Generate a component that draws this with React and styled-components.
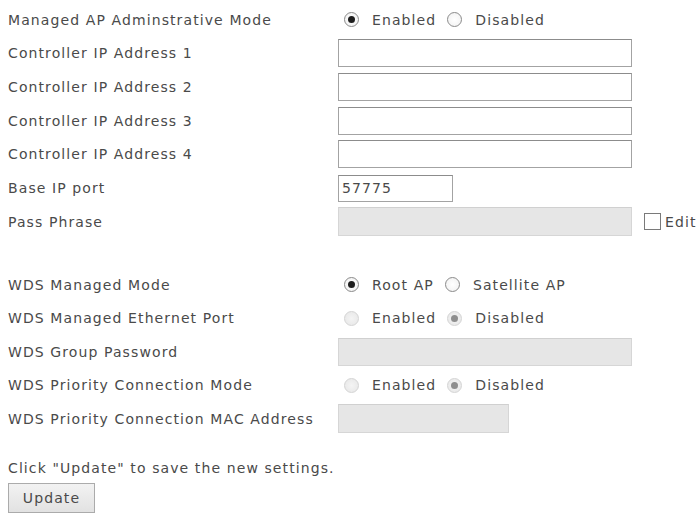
import React from "react";
import styled, { createGlobalStyle } from "styled-components";

const GlobalStyle = createGlobalStyle`
  body {
    margin: 0;
    background: #fff;
    font-family: "DejaVu Sans", Verdana, sans-serif;
    font-size: 14px;
    letter-spacing: 1.1px;
    color: #4a4a4a;
  }
`;

const Page = styled.div`
  padding: 3px 8px 0;
  width: 700px;
  box-sizing: border-box;
  overflow: hidden;
`;

const Section = styled.div`
  display: flex;
  flex-direction: column;
  margin-top: ${props => props.gap || 0}px;
`;

const Row = styled.div`
  display: grid;
  grid-template-columns: 330px 1fr;
  align-items: center;
  height: ${props => props.h}px;
`;

const Label = styled.div`
  white-space: nowrap;
`;

const Control = styled.div`
  display: flex;
  align-items: center;
  white-space: nowrap;
`;

const TextBox = styled.input`
  box-sizing: border-box;
  width: ${props => props.w}px;
  height: ${props => props.h || 28}px;
  margin: 0;
  padding: 0 3px;
  font: inherit;
  letter-spacing: 1.1px;
  color: #4a4a4a;
  border: 1px solid ${props => (props.disabled ? "#d6d6d6" : "#a3a3a3")};
  border-top-color: ${props => (props.disabled ? "#d0d0d0" : "#8c8c8c")};
  background: ${props => (props.disabled ? "#e6e6e6" : "#fff")};
  outline: none;
`;

const RadioOption = styled.label`
  display: flex;
  align-items: center;
  margin-left: 6px;
  margin-right: 5px;
`;

const RadioDot = styled.span`
  box-sizing: border-box;
  width: 15px;
  height: 15px;
  border-radius: 50%;
  margin-right: 13px;
  border: 1px solid ${props => (props.off ? "#d4d4d4" : "#8a8a8a")};
  background: ${props =>
    props.off
      ? "radial-gradient(circle, #f4f4f4 0%, #e6e6e6 100%)"
      : "radial-gradient(circle, #ffffff 0%, #f0f0f0 100%)"};
  display: flex;
  align-items: center;
  justify-content: center;
  &::after {
    content: "";
    display: ${props => (props.checked ? "block" : "none")};
    width: 7px;
    height: 7px;
    border-radius: 50%;
    background: ${props => (props.off ? "#8e8e8e" : "#1e1e1e")};
  }
`;

const CheckBox = styled.span`
  box-sizing: border-box;
  width: 17px;
  height: 17px;
  border: 1px solid #7a7a7a;
  background: #fff;
  margin: 0 4px 0 12px;
`;

const Note = styled.div`
  margin-top: 24px;
  line-height: 16px;
`;

const Button = styled.button`
  margin-top: 7px;
  width: 87px;
  height: 30px;
  font: inherit;
  letter-spacing: 1.1px;
  color: #4a4a4a;
  border: 1px solid #ababab;
  background: linear-gradient(#f2f2f2, #e2e2e2);
  padding: 0;
`;

const Radios = ({ options, value, disabled }) => (
  <Control>
    {options.map(o => (
      <RadioOption key={o}>
        <RadioDot checked={o === value} off={disabled} />
        {o}
      </RadioOption>
    ))}
  </Control>
);

const first = 33.67;
const second = 33.5;

export default function App() {
  return (
    <Page>
      <GlobalStyle />
      <Section>
        <Row h={first}>
          <Label>Managed AP Adminstrative Mode</Label>
          <Radios options={["Enabled", "Disabled"]} value="Enabled" />
        </Row>
        {[1, 2, 3, 4].map(n => (
          <Row h={first} key={n}>
            <Label>Controller IP Address {n}</Label>
            <Control>
              <TextBox w={294} h={28} readOnly value="" />
            </Control>
          </Row>
        ))}
        <Row h={first}>
          <Label>Base IP port</Label>
          <Control>
            <TextBox w={115} h={27} readOnly value="57775" />
          </Control>
        </Row>
        <Row h={first}>
          <Label>Pass Phrase</Label>
          <Control>
            <TextBox w={294} h={29} disabled value="" />
            <CheckBox />
            Edit
          </Control>
        </Row>
      </Section>
      <Section gap={29.5}>
        <Row h={second}>
          <Label>WDS Managed Mode</Label>
          <Radios options={["Root AP", "Satellite AP"]} value="Root AP" />
        </Row>
        <Row h={second}>
          <Label>WDS Managed Ethernet Port</Label>
          <Radios options={["Enabled", "Disabled"]} value="Disabled" disabled />
        </Row>
        <Row h={second}>
          <Label>WDS Group Password</Label>
          <Control>
            <TextBox w={294} h={28} disabled value="" />
          </Control>
        </Row>
        <Row h={second}>
          <Label>WDS Priority Connection Mode</Label>
          <Radios options={["Enabled", "Disabled"]} value="Disabled" disabled />
        </Row>
        <Row h={second}>
          <Label>WDS Priority Connection MAC Address</Label>
          <Control>
            <TextBox w={171} h={29} disabled value="" />
          </Control>
        </Row>
      </Section>
      <Note>Click "Update" to save the new settings.</Note>
      <Button>Update</Button>
    </Page>
  );
}
